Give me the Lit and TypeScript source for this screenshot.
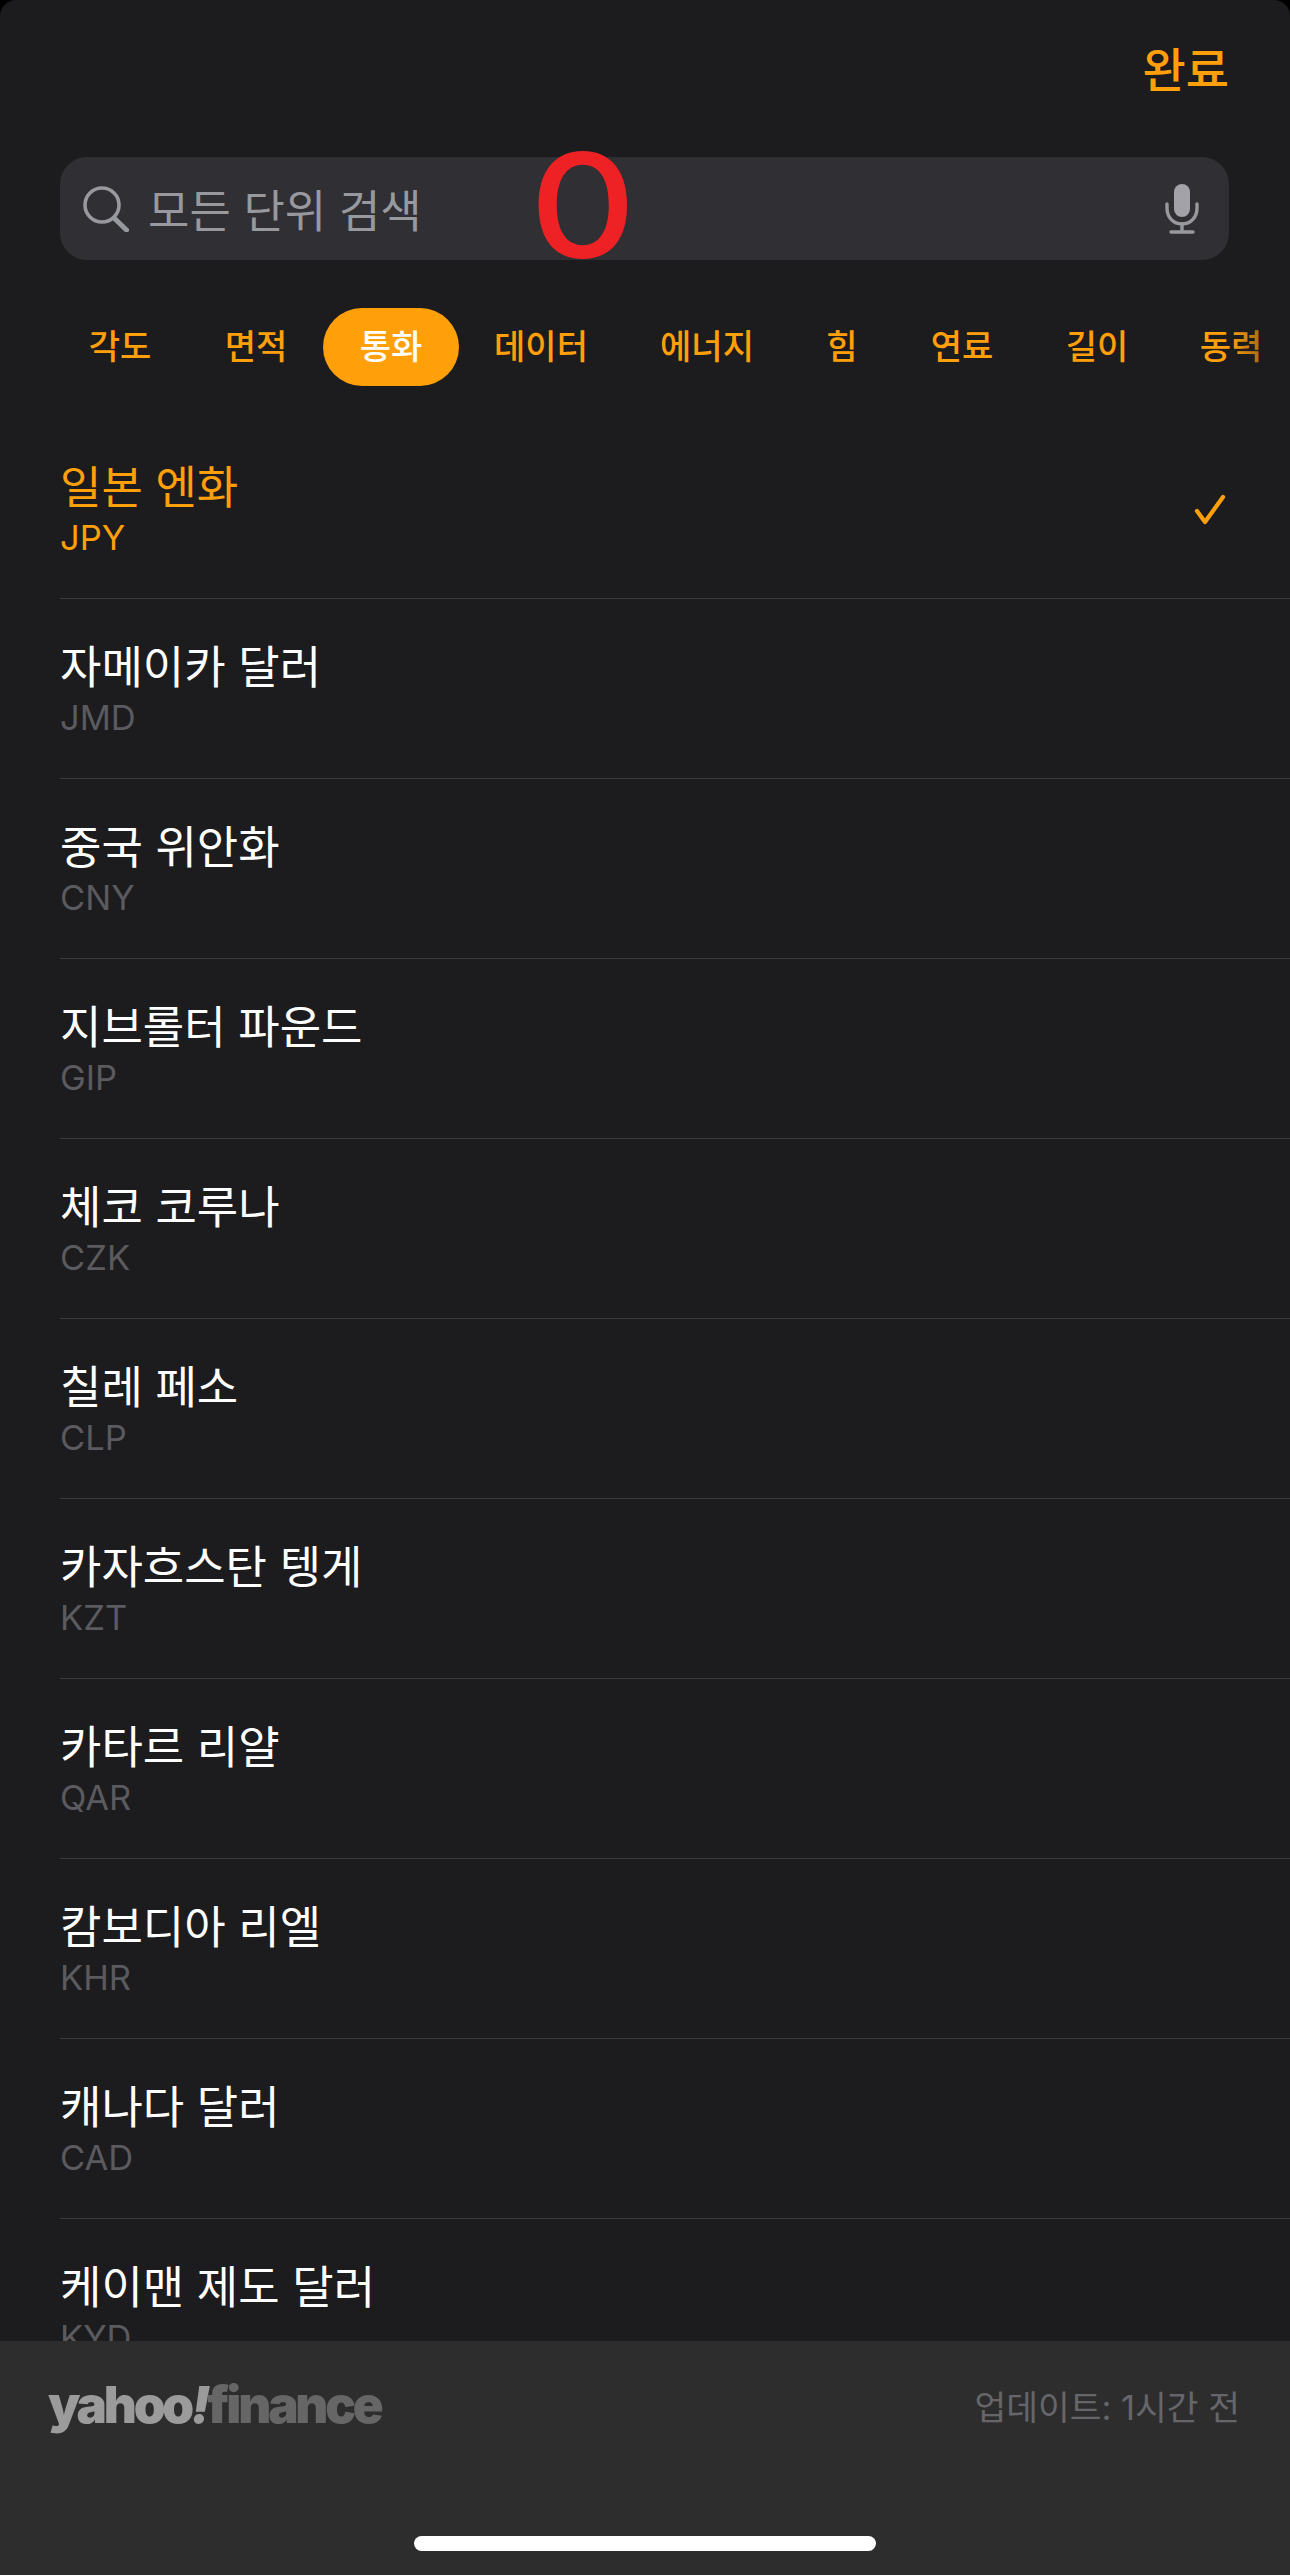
import { LitElement, html, css, svg } from "lit";
import { customElement } from "lit/decorators.js";

const tabs = ["각도", "면적", "통화", "데이터", "에너지", "힘", "연료", "길이", "동력"];
const rows = [
  ["일본 엔화", "JPY"],
  ["자메이카 달러", "JMD"],
  ["중국 위안화", "CNY"],
  ["지브롤터 파운드", "GIP"],
  ["체코 코루나", "CZK"],
  ["칠레 페소", "CLP"],
  ["카자흐스탄 텡게", "KZT"],
  ["카타르 리얄", "QAR"],
  ["캄보디아 리엘", "KHR"],
  ["캐나다 달러", "CAD"],
  ["케이맨 제도 달러", "KYD"],
];

@customElement("app-root")
export class AppRoot extends LitElement {
  static styles = css`
    :host {
      display: block;
      width: 1290px;
      height: 2575px;
      background: #000;
      font-family: Inter, "Noto Sans CJK KR", "Liberation Sans", sans-serif;
      overflow: hidden;
    }
    .sheet {
      position: relative;
      height: 2575px;
      background: #1c1c1e;
      border-radius: 16px 16px 0 0;
      overflow: hidden;
      display: flex;
      flex-direction: column;
    }
    .top {
      display: flex;
      justify-content: flex-end;
      padding: 38px 61px 0 0;
      height: 157px;
      box-sizing: border-box;
    }
    .done {
      color: #ff9f0a;
      font-size: 47px;
      font-weight: 500;
      line-height: 64px;
    }
    .search {
      margin: 0 61px 0 60px;
      height: 103px;
      border-radius: 27px;
      background: #2f2f34;
      display: flex;
      align-items: center;
      padding: 0 30px 0 23px;
      gap: 19px;
      color: #98989f;
      font-size: 45px;
    }
    .search .ph {
      flex: 1;
    }
    .zero {
      position: absolute;
      left: 536px;
      top: 116px;
      color: #ee2225;
      font-size: 145px;
      line-height: 180px;
      font-weight: 500;
      transform: scaleX(1.14);
    }
    .tabs {
      margin-top: 48px;
      display: flex;
      height: 78px;
      align-items: center;
      white-space: nowrap;
      position: relative;
    }
    .tab {
      position: absolute;
      top: 0;
      height: 78px;
      line-height: 78px;
      transform: translateX(-50%);
      color: #ff9f0a;
      font-size: 34px;
      font-weight: 500;
      text-align: center;
    }
    .tab.on {
      background: #ff9f0a;
      color: #fff;
      border-radius: 39px;
      width: 136px;
    }
    .fade {
      position: absolute;
      right: 0;
      top: 0;
      width: 60px;
      height: 78px;
      background: linear-gradient(to right, rgba(28, 28, 30, 0), rgba(28, 28, 30, 0.75));
    }
    .list {
      margin-top: 33px;
      margin-left: 60px;
    }
    .row {
      height: 180px;
      box-sizing: border-box;
      border-bottom: 1.5px solid #3a3a3c;
      display: flex;
      align-items: center;
      padding-right: 64px;
    }
    .row .t {
      flex: 1;
      padding-bottom: 3px;
    }
    .check {
      margin-top: 2px;
    }
    .name {
      color: #fff;
      font-size: 45px;
      line-height: 64px;
    }
    .code {
      color: #5a5a5f;
      font-size: 34.5px;
      line-height: 42px;
      margin-top: -3px;
    }
    .row.sel .name,
    .row.sel .code {
      color: #ff9f0a;
    }
    .foot {
      position: absolute;
      left: 0;
      right: 0;
      top: 2341px;
      bottom: 0;
      background: #2d2d2d;
    }
    .foot-in {
      display: flex;
      justify-content: space-between;
      align-items: center;
      padding: 29px 50px 0 48px;
    }
    .logo {
      font-family: Inter, sans-serif;
      font-weight: 900;
      font-size: 51px;
      line-height: 70px;
      letter-spacing: -3.2px;
      color: #9b9b9b;
    }
    .logo span {
      color: #666;
    }
    .logo i {
      font-style: italic;
    }
    .upd {
      color: #66666a;
      font-size: 34.5px;
    }
    .home {
      position: absolute;
      left: 414px;
      top: 2536px;
      width: 462px;
      height: 15px;
      background: #fff;
      border-radius: 8px;
    }
  `;

  render() {
    const centers = [120, 256, 391, 541, 707, 842, 962, 1097, 1231];
    return html`<div class="sheet">
      <div class="top"><div class="done">완료</div></div>
      <div class="search">
        <svg width="46" height="46" viewBox="0 0 46 46" fill="none" stroke="#98989f">
          ${svg`<circle cx="19" cy="19" r="17" stroke-width="3.6"/>
          <path d="M31 32 L43.5 44" stroke-width="5" stroke-linecap="round"/>`}
        </svg>
        <div class="ph">모든 단위 검색</div>
        <svg width="34" height="50" viewBox="0 0 34 50" fill="none">
          ${svg`<rect x="9" y="0" width="16" height="33" rx="8" fill="#a2a2a8"/>
          <path d="M2 20 V24 C2 33 8 40 17 40 C26 40 32 33 32 24 V20" stroke="#98989f" stroke-width="3.4" stroke-linecap="round"/>
          <path d="M17 40 V48 M6 48 H28" stroke="#98989f" stroke-width="3.4" stroke-linecap="round"/>`}
        </svg>
      </div>
      <div class="zero">0</div>
      <div class="tabs">
        ${tabs.map(
          (t, i) =>
            html`<div class="tab ${i === 2 ? "on" : ""}" style="left:${centers[i]}px">${t}</div>`
        )}
        <div class="fade"></div>
      </div>
      <div class="list">
        ${rows.map(
          (r, i) => html`<div class="row ${i === 0 ? "sel" : ""}">
            <div class="t">
              <div class="name">${r[0]}</div>
              <div class="code">${r[1]}</div>
            </div>
            ${i === 0
              ? html`<svg class="check" width="32" height="32" viewBox="0 0 32 32" fill="none">
                  ${svg`<path d="M3 17 L11 28 L29 3" stroke="#ff9f0a" stroke-width="4.2" stroke-linecap="round" stroke-linejoin="round"/>`}
                </svg>`
              : ""}
          </div>`
        )}
      </div>
      <div class="foot">
        <div class="foot-in">
          <div class="logo">yahoo<i>!</i><span>finance</span></div>
          <div class="upd">업데이트: 1시간 전</div>
        </div>
      </div>
      <div class="home"></div>
    </div>`;
  }
}
